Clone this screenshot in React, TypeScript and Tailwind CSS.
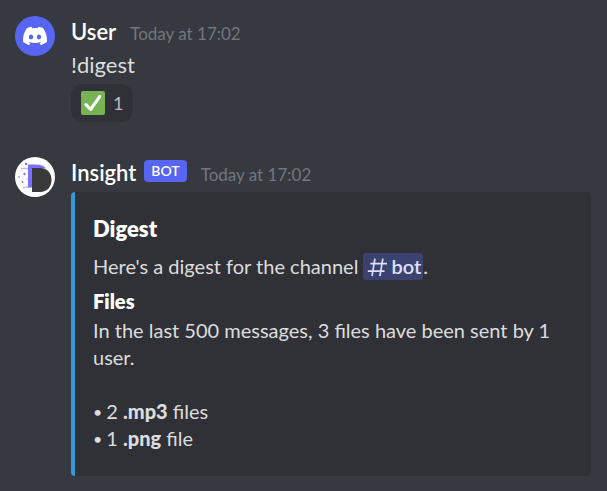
import type { ReactNode } from "react";
import { SiDiscord } from "react-icons/si";

function UserAvatar() {
  return (
    <div className="flex size-10 shrink-0 items-center justify-center rounded-full bg-[#5865f2] text-white">
      <SiDiscord className="size-6" aria-hidden="true" />
    </div>
  );
}

function InsightAvatar() {
  return (
    <svg viewBox="0 0 40 40" className="size-10 shrink-0" aria-hidden="true">
      <circle cx="20" cy="20" r="20" fill="#fff" />
      <path d="M13 7.500h8c5 0 8 1.500 10 4H17v19h-4z" fill="#7a70ff" />
      <path d="M17 11h8c7.500 0 11.500 5 11.500 12S32 35 25 35h-8z" fill="#3a3a3a" />
      <g fill="#7a70ff">
        <circle cx="11" cy="7" r="1.200" />
        <circle cx="9.500" cy="17" r="1.200" />
        <circle cx="4" cy="20" r="0.800" />
        <circle cx="7.500" cy="25" r="0.900" />
        <circle cx="12" cy="22" r="0.500" />
        <circle cx="6" cy="14" r="0.400" />
      </g>
      <path d="M6 11l1.500 1 1.500-1 1.500 1 2.500-1M8 30l1.500 1 1.500-1.500 1.500 1 3-1" fill="none" stroke="#7a70ff" strokeWidth="0.700" />
    </svg>
  );
}

function Message({ avatar, author, bot, children }: { avatar: ReactNode; author: string; bot?: boolean; children: ReactNode }) {
  return (
    <article className="flex gap-4">
      {avatar}
      <div className="min-w-0 flex-1">
        <header className="flex h-8 items-center">
          <h2 className="text-[22px] leading-7 font-semibold text-white">{author}</h2>
          {bot && (
            <span className="mb-1 ml-2 flex h-[22px] items-center rounded bg-[#5865f2] px-[7px] text-sm font-semibold text-white">BOT</span>
          )}
          <time className="ml-3.5 pt-1 text-[17px] leading-6 text-[#72767d]">Today at 17:02</time>
        </header>
        {children}
      </div>
    </article>
  );
}

function ChannelMention() {
  return (
    <a href="#bot" className="inline-flex h-[27px] items-center gap-1 rounded-[3px] bg-[#3c4270] px-0.5 align-bottom font-semibold text-[#dee0fc]">
      <svg viewBox="0 0 24 24" className="ml-0.5 size-5" fill="none" stroke="currentColor" strokeWidth="2" aria-hidden="true">
        <path d="M9.500 2 6 23M19 2 15.500 23M4 8h20M1 17h20" />
      </svg>
      bot
    </a>
  );
}

function FileCount({ count, extension, noun }: { count: number; extension: string; noun: string }) {
  return (
    <li className="flex gap-1">
      <span className="text-base leading-[27px]">•</span>
      <span>
        {count} <strong className="font-black">{extension}</strong> {noun}
      </span>
    </li>
  );
}

export default function App() {
  return (
    <main className="min-h-screen bg-[#36393f] px-4 pt-4 pb-4 pl-[15px] font-['Lato',sans-serif] text-xl text-[#dcddde]">
      <Message avatar={<UserAvatar />} author="User">
        <p className="text-[22px] leading-[34px]">!digest</p>
        <button type="button" className="mt-0.5 flex h-[38px] items-center gap-2 rounded-xl bg-[#2f3136] px-2.5 text-lg text-[#b9bbbe]">
          <svg viewBox="0 0 36 36" className="size-6" aria-hidden="true">
            <rect width="36" height="36" rx="3" fill="#77b255" />
            <path d="M7.500 20.500l7 7L28 8.500" fill="none" stroke="#fff" strokeWidth="4.800" strokeLinecap="round" strokeLinejoin="round" />
          </svg>
          1
        </button>
      </Message>
      <div className="h-[35px]" />
      <Message avatar={<InsightAvatar />} author="Insight" bot>
        <section className="mt-[3px] rounded border-l-4 border-[#3498db] bg-[#2f3136] px-[18px] pt-[22px] pb-6 leading-[27px]">
          <h3 className="text-[22px] leading-[30px] font-extrabold text-white">Digest</h3>
          <p className="mt-[9px]">
            Here's a digest for the channel <ChannelMention />.
          </p>
          <h4 className="mt-2 font-extrabold text-white">Files</h4>
          <p className="mt-0.5">In the last 500 messages, 3 files have been sent by 1 user.</p>
          <ul className="mt-[27px]">
            <FileCount count={2} extension=".mp3" noun="files" />
            <FileCount count={1} extension=".png" noun="file" />
          </ul>
        </section>
      </Message>
    </main>
  );
}
